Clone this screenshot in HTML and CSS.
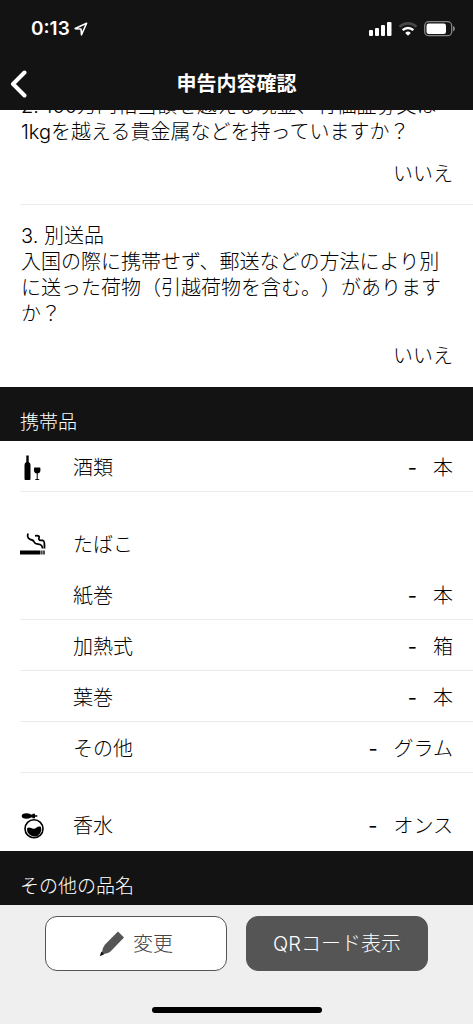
FILE: index.html
```html
<!DOCTYPE html>
<html lang="ja">
<head>
  <meta charset="UTF-8" />
  <meta name="viewport" content="width=device-width, initial-scale=1.0" />
  <title>申告内容確認</title>
  <link rel="stylesheet" href="styles.css">
</head>
<body>
  <header class="top-bar">
    <div class="status-bar">
      <div class="status-time">
        <span>0:13</span>
        <svg width="14" height="14" viewBox="0 0 14 14">
          <path d="M1.2 6.6 L12.6 1.3 L7.5 12.8 L7 7 Z" fill="none" stroke="#fff" stroke-width="1.6" stroke-linejoin="round" />
        </svg>
      </div>
      <div class="status-icons">
        <svg width="23" height="14" viewBox="0 0 23 14" fill="#fff">
          <rect x="0" y="8" width="4" height="6" rx="1" />
          <rect x="6" y="6" width="4" height="8" rx="1" />
          <rect x="12" y="3" width="4" height="11" rx="1" />
          <rect x="18" y="0" width="4.5" height="14" rx="1" />
        </svg>
        <svg width="20" height="14" viewBox="0 0 20 14" fill="none" stroke-width="2.6">
          <path d="M1.5 4.8 A12.2 12.2 0 0 1 18.5 4.8" stroke="#484848" />
          <path d="M4.7 8.1 A7.6 7.6 0 0 1 15.3 8.1" stroke="#fff" />
          <path d="M10 13.8 L7.2 10.9 A4 4 0 0 1 12.8 10.9 Z" fill="#fff" />
        </svg>
        <svg width="31" height="16" viewBox="0 0 31 16">
          <rect x="0.7" y="0.7" width="27" height="14" rx="4" fill="none" stroke="#858585" stroke-width="1.3" />
          <rect x="2.5" y="2.5" width="19.5" height="10.5" rx="2.2" fill="#fff" />
          <path d="M29 5 Q31 5.8 31 7.7 Q31 9.6 29 10.4 Z" fill="#858585" />
        </svg>
      </div>
    </div>
    <div class="nav-bar">
      <button class="back-btn" type="button" aria-label="戻る">
        <svg width="18" height="28" viewBox="0 0 18 28">
          <path d="M14.5 2.5 L3 14 L14.5 25.5" fill="none" stroke="#fff" stroke-width="4" stroke-linecap="round" stroke-linejoin="round" />
        </svg>
      </button>
      <h1>申告内容確認</h1>
    </div>
  </header>

  <main class="content">
    <!-- Questions -->
    <section class="question scrolled">
      <p>2. 100万円相当額を越える現金、有価証券又は1kgを越える貴金属などを持っていますか？</p>
      <p class="answer">いいえ</p>
    </section>
    <section class="question">
      <h2>3. 別送品</h2>
      <p>入国の際に携帯せず、郵送などの方法により別に送った荷物（引越荷物を含む。）がありますか？</p>
      <p class="answer">いいえ</p>
    </section>

    <!-- Carried items -->
    <h2 class="band">携帯品</h2>
    <div class="items">
      <ul class="item-group">
        <li class="item">
          <svg class="item-icon" width="26" height="26" viewBox="0 0 26 26">
            <path d="M6.3 0.5 H8.7 V7 Q10.5 8.2 10.5 10 V24 Q10.5 25 9.5 25 H5.500 Q4.500 25 4.500 24 V10 Q4.500 8.200 6.300 7 Z" />
            <path d="M14.2 12.5 H20.2 Q21.4 18 17.7 18.500 V24 Q19.500 24 19.500 25 H15 Q15 24 16.700 24 V18.500 Q13 18 14.200 12.500 Z" />
          </svg>
          <span class="item-name">酒類</span>
          <span class="item-count">-</span>
          <span class="item-unit">本</span>
        </li>
      </ul>
      <ul class="item-group">
        <li class="item heading">
          <svg class="item-icon" width="26" height="26" viewBox="0 0 26 26">
            <path d="M0 18.500 H20.500 V22.500 H0 Z M21.300 18.500 H22.500 V22.500 H21.300 Z M23.300 18.500 H24.700 V22.500 H23.300 Z" />
            <path d="M8 1.500 C6.500 5.500 9 7.500 12 8 C14.500 8.500 13.500 10.500 15.500 11.500 C18 12.700 22.500 11.200 22.500 16.500" fill="none" stroke="#000" stroke-width="1.800" />
            <path d="M15 3.800 C20 3.200 19.500 5 18.800 6.500 C18.500 8.500 21 8.300 23 8.500 C25 9 24.300 12 24.500 16.500" fill="none" stroke="#000" stroke-width="1.800" />
          </svg>
          <span class="item-name">たばこ</span>
        </li>
        <li class="item">
          <span class="item-name">紙巻</span>
          <span class="item-count">-</span>
          <span class="item-unit">本</span>
        </li>
        <li class="item">
          <span class="item-name">加熱式</span>
          <span class="item-count">-</span>
          <span class="item-unit">箱</span>
        </li>
        <li class="item">
          <span class="item-name">葉巻</span>
          <span class="item-count">-</span>
          <span class="item-unit">本</span>
        </li>
        <li class="item">
          <span class="item-name">その他</span>
          <span class="item-count">-</span>
          <span class="item-unit">グラム</span>
        </li>
      </ul>
      <ul class="item-group">
        <li class="item">
          <svg class="item-icon" width="26" height="26" viewBox="0 0 26 26">
            <ellipse cx="6.5" cy="3" rx="4.8" ry="2.7" />
            <path d="M10 1.8 L12.500 1.600 V0.800 H15 V2.300 H17.300 V3.700 H15 V5.200 H12.500 V4.400 L10 4.200 Z" />
            <circle cx="14" cy="15.800" r="9" fill="none" stroke="#000" stroke-width="1.600" />
            <path d="M7 15.500 C9 13.500 11 15.500 13.500 15.800 C16 16 17.500 12.300 21 14 A7.200 7.200 0 1 1 7 15.500 Z" />
          </svg>
          <span class="item-name">香水</span>
          <span class="item-count">-</span>
          <span class="item-unit">オンス</span>
        </li>
      </ul>
    </div>

    <h2 class="band">その他の品名</h2>
  </main>

  <footer class="bottom-bar">
    <div class="actions">
      <button class="btn" type="button">
        <svg width="26" height="26" viewBox="0 0 26 26">
          <path d="M19 0.5 L25 6.5 L12 20 Q9.5 22.5 3.8 23 L2.8 22 Q3.5 16.5 5.8 13.8 Z" fill="#555" />
          <path d="M2.3 20.5 L5.2 23.3 L0.8 25.2 Z" fill="#111" />
        </svg>
        変更
      </button>
      <button class="btn btn-dark" type="button">QRコード表示</button>
    </div>
    <div class="home-indicator"></div>
  </footer>
</body>
</html>
```
FILE: styles.css
```css
/* Basic Reset */
* {
  margin: 0;
  padding: 0;
  box-sizing: border-box;
}

body {
  display: flex;
  flex-direction: column;
  height: 100vh;
  overflow: hidden;
  background: #fff;
  color: #000;
  font-family: Inter, "Noto Sans CJK JP", sans-serif;
  font-size: 20px;
  font-weight: 300;
  line-height: 26px;
  text-spacing-trim: space-all;
}

h1, h2 {
  font-size: inherit;
  font-weight: inherit;
}

ul {
  list-style: none;
}

button {
  font: inherit;
  border: none;
  background: none;
  cursor: pointer;
}

svg {
  flex-shrink: 0;
}

/* Top Bar */
.top-bar {
  flex-shrink: 0;
  position: relative;
  z-index: 1;
  background: #131313;
  color: #fff;
}

.status-bar {
  display: flex;
  align-items: center;
  justify-content: space-between;
  height: 58px;
  padding: 0 18px 0 31px;
}

.status-time {
  display: flex;
  align-items: center;
  gap: 4px;
  font-size: 19px;
  font-weight: 600;
}

.status-icons {
  display: flex;
  align-items: center;
  gap: 6px;
}

.nav-bar {
  display: grid;
  grid-template-columns: 40px 1fr 40px;
  align-items: center;
  height: 52px;
}

.nav-bar h1 {
  font-weight: 700;
  text-align: center;
}

.back-btn {
  display: flex;
  padding-left: 10px;
}

/* Questions */
.content {
  flex: 1;
  min-height: 0;
  overflow: hidden;
}

.question {
  margin-left: 20px;
  padding: 18px 20px 18px 1px;
}

.question.scrolled {
  margin-top: -35px;
  padding-bottom: 17px;
  border-bottom: 1px solid #ebebeb;
}

.answer {
  margin-top: 16px;
  text-align: right;
}

/* Section Band */
.band {
  height: 54px;
  padding: 23px 20px 0;
  background: #131313;
  color: #fff;
  font-size: 19px;
}

/* Items */
.items {
  padding-bottom: 1px;
}

.item-group + .item-group {
  margin-top: 26px;
}

.item {
  display: grid;
  grid-template-columns: 53px 1fr auto auto;
  align-items: center;
  height: 51px;
  margin-left: 20px;
  padding: 3px 20px 0 0;
  border-bottom: 1px solid #ebebeb;
}

.item.heading,
.item-group:last-child .item {
  border-bottom-color: transparent;
}

.item-name {
  grid-column: 2;
}

.item-count {
  margin-right: 16px;
  font-weight: 400;
}

/* Bottom Bar */
.bottom-bar {
  flex-shrink: 0;
  padding: 11px 45px;
  background: #efefef;
}

.actions {
  display: flex;
  gap: 19px;
}

.btn {
  display: flex;
  flex: 1;
  align-items: center;
  justify-content: center;
  gap: 8px;
  height: 55px;
  border: 1px solid #555;
  border-radius: 12px;
  background: #fff;
  color: #444;
}

.btn-dark {
  background: #555;
  color: #fff;
}

.home-indicator {
  width: 170px;
  height: 6px;
  margin: 36px auto 0;
  border-radius: 3px;
  background: #000;
}
```
